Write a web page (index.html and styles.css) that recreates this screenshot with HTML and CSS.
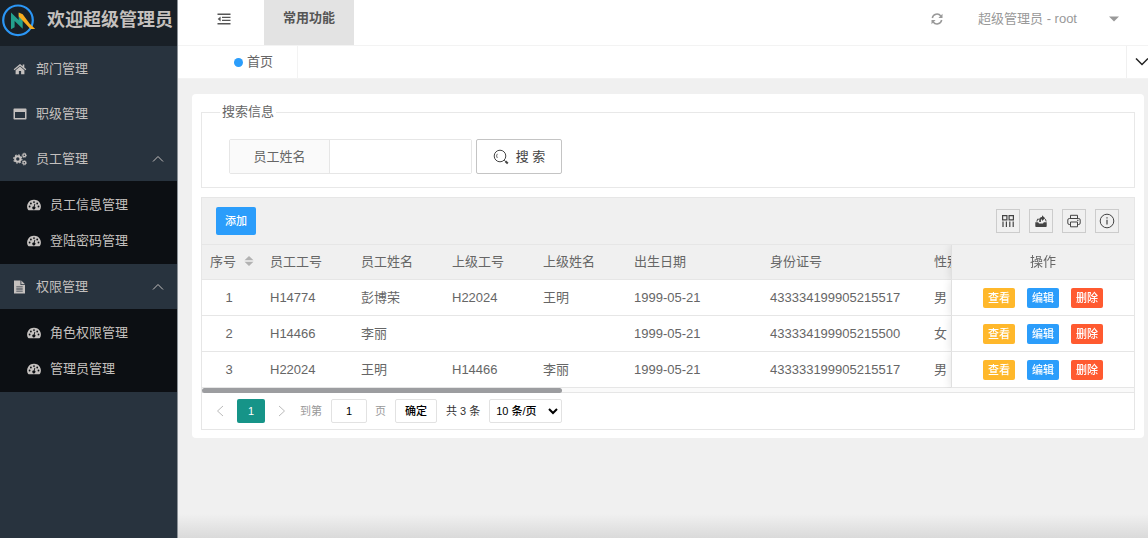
FILE: index.html
```html
<!DOCTYPE html>
<html lang="zh-CN">
<head>
<meta charset="utf-8">
<meta name="viewport" content="width=device-width, initial-scale=1">
<title>员工管理</title>
<link rel="stylesheet" href="styles.css">
</head>
<body>
<svg class="sprite" width="0" height="0" aria-hidden="true">
  <symbol id="i-gauge" viewBox="0 0 14 12">
    <path fill="currentColor" fill-rule="evenodd" d="M7 .8a6.7 6.7 0 0 0-6 10q.2.4.7.4h10.600q.5 0 .7-.4a6.700 6.700 0 0 0-6-10zM2.600 6.600a.9.9 0 1 1 0 1.800.9.900 0 0 1 0-1.800zM3.900 3.600a.9.900 0 1 1 0 1.800.9.900 0 0 1 0-1.800zM7 2.200A.9.900 0 1 1 7 4a.9.900 0 0 1 0-1.800zM10.200 3.600a.9.900 0 1 1 0 1.800.9.900 0 0 1 0-1.800zM11.500 6.600a.9.900 0 1 1 0 1.800.9.900 0 0 1 0-1.800zM8.300 4.900l-.7 2.700a1.500 1.500 0 1 1-.9-.2l.8-2.700z"/>
  </symbol>
  <symbol id="i-up" viewBox="0 0 12 8"><path d="M1 6.500 6 1.500l5 5" fill="none" stroke="currentColor" stroke-width="1"/></symbol>
</svg>
<div class="layout">
  <aside class="side">
    <a class="brand" href="#">
      <svg width="36" height="36" viewBox="0 0 36 36" aria-hidden="true">
        <circle cx="18" cy="18.300" r="14.800" fill="none" stroke="#2b96f5" stroke-width="2.200"/>
        <path d="M11 10.500 18.700 18V11l4 5V26.800L14.600 19v6.200L11 27.200z" fill="#23a08c"/>
        <path d="M18.700 10.600l4 1.600 6.800 9.300L35.200 27H30.500L18.700 14.500z" fill="#f8ac1f"/>
      </svg>
      <span>欢迎超级管理员</span>
    </a>
    <nav>
      <a class="item" href="#">
        <svg width="14" height="14" viewBox="0 0 14 14"><path fill="currentColor" d="M7 2 .7 7.300l.8.9L7 3.700l5.500 4.500.8-.9-2-1.700V2.600H9.700v1.700zM7 4.600 2.600 8.200v4.100h3.300V9h2.200v3.300h3.300V8.200z"/></svg>
        <span>部门管理</span>
      </a>
      <a class="item" href="#">
        <svg width="14" height="14" viewBox="0 0 14 14"><path fill="currentColor" fill-rule="evenodd" d="M1.300 1.500h11.400q.8 0 .8.800v9.400q0 .8-.8.8H1.300q-.8 0-.8-.8V2.300q0-.8.8-.8zM2 5v6h10V5z"/></svg>
        <span>职级管理</span>
      </a>
      <a class="item" href="#">
        <svg width="14" height="14" viewBox="0 0 14 14" fill="none" stroke="currentColor"><circle cx="4.800" cy="7" r="2.700" stroke-width="2"/><circle cx="4.800" cy="7" r="4.100" stroke-width="1.200" stroke-dasharray="1.600 1.620"/><circle cx="11.300" cy="3.300" r="1.400" stroke-width="1.200"/><circle cx="11.300" cy="3.300" r="2.200" stroke-width=".8" stroke-dasharray="1 .73"/><circle cx="11.300" cy="10.800" r="1.400" stroke-width="1.200"/><circle cx="11.300" cy="10.800" r="2.200" stroke-width=".8" stroke-dasharray="1 .73"/></svg>
        <span>员工管理</span>
        <svg class="arrow" width="12" height="8"><use href="#i-up"/></svg>
      </a>
      <div class="sub">
        <a href="#"><svg width="14" height="12"><use href="#i-gauge"/></svg><span>员工信息管理</span></a>
        <a href="#"><svg width="14" height="12"><use href="#i-gauge"/></svg><span>登陆密码管理</span></a>
      </div>
      <a class="item" href="#">
        <svg width="14" height="14" viewBox="0 0 14 14"><path fill="currentColor" fill-rule="evenodd" d="M1 .5h6.500V5H12v8.500H1zM8.300.5l3.700 3.700H8.300zM3.300 6.500v.8h6.400v-.8zM3.300 8.600v.8h6.400v-.8zM3.300 10.700v.8h6.400v-.8z"/></svg>
        <span>权限管理</span>
        <svg class="arrow" width="12" height="8"><use href="#i-up"/></svg>
      </a>
      <div class="sub">
        <a href="#"><svg width="14" height="12"><use href="#i-gauge"/></svg><span>角色权限管理</span></a>
        <a href="#"><svg width="14" height="12"><use href="#i-gauge"/></svg><span>管理员管理</span></a>
      </div>
    </nav>
  </aside>

  <main class="main">
    <header class="top">
      <button class="plain fold" type="button" aria-label="收起菜单">
        <svg width="14" height="12" viewBox="0 0 14 12"><path fill="currentColor" d="M.5.5h13V2H.5zM5 3.700h8.500V5H5zM5 6.800h8.500v1.300H5zM.5 10h13v1.500H.5zM3.600 3.400v5L.7 5.900z"/></svg>
      </button>
      <a class="module" href="#">常用功能</a>
      <button class="plain refresh" type="button" aria-label="刷新">
        <svg width="12" height="12" viewBox="0 0 12 12"><path d="M1.300 5a4.800 4.800 0 0 1 8.500-2M10.700 7a4.800 4.800 0 0 1-8.500 2" fill="none" stroke="currentColor" stroke-width="1.500"/><path fill="currentColor" d="M11.500.8v4.100H7.400zM.5 11.200V7.100h4.100z"/></svg>
      </button>
      <a class="user" href="#"><span>超级管理员 - root</span>
        <svg width="10" height="6" viewBox="0 0 10 6"><path fill="currentColor" d="M0 .5h10l-5 5z"/></svg></a>
    </header>
    <div class="tabs">
      <a class="tab" href="#"><i class="dot"></i>首页</a>
      <button class="plain more" type="button" aria-label="更多标签">
        <svg width="14" height="10" viewBox="0 0 14 10"><path d="M1 1.500 7 7.500l6-6" fill="none" stroke="currentColor" stroke-width="1.500"/></svg>
      </button>
    </div>

    <section class="panel">
      <fieldset class="search">
        <legend>搜索信息</legend>
        <form class="form">
          <div class="group"><label for="name">员工姓名</label><input id="name" type="text"></div>
          <button class="find" type="button">
            <svg width="16" height="16" viewBox="0 0 16 16" fill="none" stroke="currentColor"><circle cx="7" cy="7" r="5.800"/><path d="M4.300 9a3.600 3.600 0 0 1 0-4.200" stroke-width=".8"/><path d="m11.200 11.200 1.300 1.200"/><path d="m12.400 12.200 2.400 2.300" stroke-width="2"/></svg>
            <span>搜 索</span>
          </button>
        </form>
      </fieldset>

      <div class="grid">
        <div class="toolbar">
          <button class="add" type="button">添加</button>
          <div class="tools">
            <button type="button" aria-label="筛选列"><svg width="14" height="14" viewBox="0 0 14 14" fill="none" stroke="currentColor" stroke-width="1.200"><path d="M1.600 1.600h4.300v4.300H1.600zM8.100 1.600h4.300v4.300H8.100zM2 7.500V13M5.400 7.500V13M8.800 7.500V13M12.200 7.500V13"/></svg></button>
            <button type="button" aria-label="导出"><svg width="14" height="14" viewBox="0 0 14 14"><path fill="currentColor" d="M1.300 8.300h2.900l.8 1.200h4l.8-1.200h2.900v3.900q0 .8-.8.8H2.100q-.8 0-.8-.8zM2.200 7.400l1.200-2.600h1.900l-.6 1H4l-.7 1.600zM11.800 7.400l-.9-2 .8-.7 1 2.700zM5.200 8V6.300Q5.200 3.300 8 3.100V1.300l3.200 2.900L8 7V5.200Q6.900 5.300 6.900 6.500V8z"/></svg></button>
            <button type="button" aria-label="打印"><svg width="14" height="14" viewBox="0 0 14 14" fill="none" stroke="currentColor"><path d="M3.500 4.500V1.300h7v3.200M3.500 10.500H2.300q-1.500 0-1.500-1.500V6q0-1.500 1.500-1.500h9.400q1.500 0 1.500 1.500v3q0 1.500-1.500 1.500h-1.200M3.500 8h7v4.800h-7z"/><path d="M10 6.300h1.500"/></svg></button>
            <button type="button" aria-label="提示"><svg width="16" height="16" viewBox="0 0 16 16" fill="none" stroke="currentColor"><circle cx="8" cy="8" r="6.800"/><path d="M8 6.800v4.700M8 4.300v1.300" stroke-width="1.200"/></svg></button>
          </div>
        </div>
        <div class="scroller">
          <table>
            <colgroup><col class="c-no"><col class="c-s"><col class="c-s"><col class="c-s"><col class="c-s"><col class="c-date"><col class="c-id"><col class="c-sex"><col class="c-rest"><col class="c-act"></colgroup>
            <thead>
              <tr><th class="no">序号<svg width="10" height="12" viewBox="0 0 10 12"><path fill="#b2b2b2" d="M5 1l4.500 4.200h-9zM5 11l4.500-4.200h-9z"/></svg></th><th>员工工号</th><th>员工姓名</th><th>上级工号</th><th>上级姓名</th><th>出生日期</th><th>身份证号</th><th>性别</th><th></th><th class="act">操作</th></tr>
            </thead>
            <tbody>
              <tr><td class="no">1</td><td>H14774</td><td>彭博荣</td><td>H22024</td><td>王明</td><td>1999-05-21</td><td>433334199905215517</td><td>男</td><td></td><td class="act"><div class="ops"><button class="view" type="button">查看</button><button class="edit" type="button">编辑</button><button class="del" type="button">删除</button></div></td></tr>
              <tr><td class="no">2</td><td>H14466</td><td>李丽</td><td></td><td></td><td>1999-05-21</td><td>433334199905215500</td><td>女</td><td></td><td class="act"><div class="ops"><button class="view" type="button">查看</button><button class="edit" type="button">编辑</button><button class="del" type="button">删除</button></div></td></tr>
              <tr><td class="no">3</td><td>H22024</td><td>王明</td><td>H14466</td><td>李丽</td><td>1999-05-21</td><td>433333199905215517</td><td>男</td><td></td><td class="act"><div class="ops"><button class="view" type="button">查看</button><button class="edit" type="button">编辑</button><button class="del" type="button">删除</button></div></td></tr>
            </tbody>
          </table>
        </div>
        <div class="track"><div class="thumb"></div></div>
        <div class="pager">
          <button class="plain step" type="button" aria-label="上一页"><svg width="8" height="12" viewBox="0 0 8 12"><path d="M7 1 1.500 6 7 11" fill="none" stroke="currentColor"/></svg></button>
          <button class="current" type="button">1</button>
          <button class="plain step" type="button" aria-label="下一页"><svg width="8" height="12" viewBox="0 0 8 12"><path d="M1 1l5.500 5L1 11" fill="none" stroke="currentColor"/></svg></button>
          <label class="muted" for="page">到第</label>
          <input id="page" type="text" value="1">
          <span class="muted">页</span>
          <button class="ok" type="button">确定</button>
          <span class="total">共 3 条</span>
          <select aria-label="每页条数"><option>10 条/页</option><option>20 条/页</option></select>
        </div>
      </div>
    </section>
  </main>
</div>
</body>
</html>
```
FILE: styles.css
```css
* { box-sizing: border-box; }
body {
  margin: 0;
  font: 13px/20px "Liberation Sans", "Noto Sans CJK SC", sans-serif;
  color: #666;
}
a { color: inherit; text-decoration: none; }
button, input, select { font: inherit; color: inherit; margin: 0; padding: 0; }
svg { display: block; flex: none; }
.sprite { position: absolute; }
.plain { display: flex; align-items: center; justify-content: center; border: 0; background: none; }

.layout { display: flex; min-height: 100vh; }

/* sidebar */
.side { flex: none; width: 178px; background: #28333e; color: #c4c0be; border-right: 1px solid #8b9197; }
.brand { display: flex; align-items: center; gap: 11px; height: 46px; padding-bottom: 6px; background: #192027; font-size: 18px; font-weight: bold; white-space: nowrap; }
.item { display: flex; align-items: center; gap: 9px; height: 45px; padding: 0 13px; }
.arrow { margin-left: auto; }
.sub { padding: 6px 0 5px; background: #0c0f13; }
.sub a { display: flex; align-items: center; gap: 9px; height: 36px; padding-left: 27px; }

/* header */
.main { flex: 1; min-width: 0; background: linear-gradient(to top, #dadada, #f0f0f0 24px); }
.top { display: flex; height: 46px; background: #fff; border-bottom: 1px solid #f3f3f3; color: #999; }
.fold { width: 86px; padding: 0 0 8px 6px; color: #555; }
.module { padding: 8px 19px 0; background: #e3e3e3; color: #555; font-weight: bold; }
.refresh { margin-left: auto; width: 36px; padding-bottom: 8px; }
.user { display: flex; align-items: center; gap: 32px; padding: 0 29px 8px 23px; }
.tabs { display: flex; height: 33px; background: #fff; border-bottom: 1px solid #f3f3f3; }
.tab { display: flex; align-items: center; gap: 4px; padding: 0 24px 0 56px; border-right: 1px solid #f3f3f3; }
.dot { width: 9px; height: 9px; border-radius: 50%; background: #2b9dfb; }
.more { margin-left: auto; width: 22px; padding-left: 8px; border-left: 1px solid #f0f0f0; color: #222; overflow: hidden; justify-content: flex-start; }

/* search */
.panel { margin: 15px 4px 0 14px; padding: 8px 9px 8px; background: #fff; border-radius: 4px; }
.search { margin: 0 0 9px; padding: 0; border: 1px solid #e8e8e8; }
.search legend { margin-left: 18px; padding: 0 2px; }
.form { display: flex; gap: 4px; padding: 17px 26px 13px 27px; }
.group { display: flex; height: 35px; border: 1px solid #e6e6e6; border-radius: 2px; }
.group label { width: 100px; line-height: 33px; text-align: center; background: #fafafa; border-right: 1px solid #e6e6e6; }
.group input { width: 141px; border: 0; background: #fff; }
.find { display: flex; align-items: center; justify-content: center; gap: 7px; width: 86px; height: 35px; border: 1px solid #c4c4c4; border-radius: 2px; background: #fff; color: #444; }

/* data grid */
.grid { border: 1px solid #e6e6e6; }
.toolbar { display: flex; align-items: center; justify-content: space-between; height: 47px; padding: 0 15px 0 14px; background: #f0f0f0; border-bottom: 1px solid #e6e6e6; }
.add { width: 40px; height: 28px; border: 0; border-radius: 2px; background: #2b9dfb; color: #fff; font-size: 11px; font-weight: 500; }
.tools { display: flex; gap: 9px; }
.tools button { display: flex; align-items: center; justify-content: center; width: 24px; height: 24px; border: 1px solid #ccc; background: none; color: #444; }
.scroller { overflow: hidden; }
table { table-layout: fixed; width: 2413px; border-collapse: separate; border-spacing: 0; }
.c-no { width: 54px; }
.c-s { width: 91px; }
.c-date { width: 136px; }
.c-id { width: 164px; }
.c-sex { width: 91px; }
.c-act { width: 183px; }
th, td { height: 36px; padding: 0 0 0 14px; text-align: left; font-weight: normal; white-space: nowrap; border-bottom: 1px solid #e6e6e6; background: #fff; }
th { height: 35px; background: #f0f0f0; }
td.no { padding: 0; text-align: center; }
th.no { padding-left: 8px; }
th.no svg { display: inline-block; margin-left: 8px; vertical-align: -1px; }
.act { position: sticky; right: 0; padding: 0; text-align: center; border-left: 1px solid #e0e0e0; box-shadow: -1px 0 8px rgba(0, 0, 0, .1); clip-path: inset(0 0 0 -10px); }
.ops { display: flex; justify-content: center; gap: 12px; }
.ops button { width: 32px; height: 20px; border: 0; border-radius: 2px; color: #fff; font-size: 11px; font-weight: 500; line-height: 20px; }
.ops .view { background: #ffb82b; }
.ops .edit { background: #2b9dfb; }
.ops .del { background: #ff5a30; }
.track { height: 5px; background: #fafafa; border-bottom: 1px solid #e6e6e6; }
.thumb { width: 360px; max-width: 100%; height: 5px; border-radius: 3px; background: #9c9da0; }

/* pager */
.pager { display: flex; align-items: center; height: 36px; padding-left: 8px; font-size: 11px; color: #333; }
.step { width: 20px; height: 24px; color: #bbb; }
.current { width: 28px; height: 24px; margin: 0 7px; border: 0; border-radius: 2px; background: #169488; color: #fff; }
.muted { color: #999; margin: 0 9px 0 8px; }
.pager input, .ok, .pager select { height: 24px; border: 1px solid #e2e2e2; border-radius: 2px; background: #fff; color: #000; }
.pager input { width: 36px; text-align: center; }
.ok { width: 42px; font-weight: 500; }
.total { margin: 0 9px; }
.pager select { width: 73px; padding-left: 2px; font-weight: 500; }
```
